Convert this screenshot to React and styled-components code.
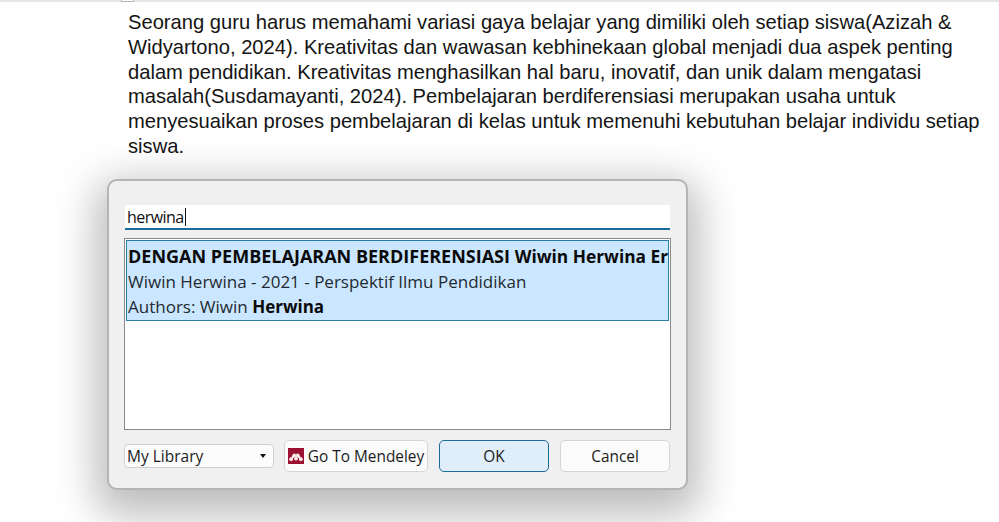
import React from "react";
import styled, { createGlobalStyle } from "styled-components";

const Global = createGlobalStyle`
  html, body { margin: 0; padding: 0; background: #fff; width: 999px; height: 522px; overflow: hidden; }
`;
const Page = styled.div`
  position: relative;
  width: 999px;
  height: 522px;
  overflow: hidden;
  background: #fff;
`;
const TopRule = styled.div`
  height: 2px;
  background: #e6e6e6;
`;
const Marker = styled.div`
  position: absolute;
  left: 121px;
  top: 0;
  width: 11px;
  height: 1px;
  background: #fff;
  border: solid #b5b5b5;
  border-width: 0 1px 1px;
`;
const Doc = styled.p`
  margin: 8px 0 0 128px;
  font: 20.17px/24.8px "Liberation Sans", Arial, sans-serif;
  color: #141414;
  white-space: nowrap;
`;
const Dialog = styled.section`
  position: absolute;
  left: 107px;
  top: 179px;
  width: 581px;
  height: 311px;
  box-sizing: border-box;
  padding: 24px 16px 0;
  display: flex;
  flex-direction: column;
  background: #f0f0f0;
  border: 2px solid #b4b4b4;
  border-radius: 10px;
  box-shadow: 0 14px 40px 12px rgba(0, 0, 0, 0.26);
  font-family: "Open Sans", "Noto Sans", sans-serif;
  color: #1b1b1b;
`;
const Search = styled.div`
  height: 25px;
  box-sizing: border-box;
  background: #fff;
  border-bottom: 2px solid #1a6c9c;
  padding-left: 2px;
  font-size: 16px;
  letter-spacing: -0.55px;
  line-height: 22px;
  color: #111;
  display: flex;
  align-items: center;
`;
const Caret = styled.span`
  width: 1px;
  height: 18px;
  margin-left: 1px;
  background: #111;
`;
const List = styled.div`
  margin: 8px 0 0 -1px;
  width: 547px;
  height: 192px;
  box-sizing: border-box;
  padding: 1px;
  background: #fff;
  border: 1px solid #8a8a8a;
`;
const Item = styled.div`
  height: 81px;
  box-sizing: border-box;
  border: 1px solid #2a7ea6;
  background: #cbe7ff;
  padding: 3px 1px 0 1px;
  overflow: hidden;
  font-size: 17px;
  line-height: 25px;
  white-space: nowrap;
`;
const Title = styled.div`
  font-weight: 700;
  color: #0a0a0a;
  font-size: 18px;
`;
const TitleName = styled.span`
  font-size: 17.33px;
`;
const Sub = styled.div`
  color: #1f2a30;
`;
const Strong = styled.b`
  color: #0a0a0a;
`;
const Footer = styled.div`
  margin: 10px 0 0 -1px;
  display: flex;
  align-items: center;
`;
const Select = styled.div`
  width: 150px;
  height: 24px;
  box-sizing: border-box;
  margin: -1px 10px 0 0;
  padding: 1px 7px 0 2px;
  display: flex;
  align-items: center;
  justify-content: space-between;
  background: #fcfcfc;
  border: 1px solid #d0d0d0;
  border-radius: 4px;
  font-size: 15.5px;
`;
const Arrow = styled.span`
  width: 0;
  height: 0;
  border: solid transparent;
  border-width: 4px 3.5px 0;
  border-top-color: #111;
`;
const Button = styled.div`
  height: 32px;
  width: ${(p) => p.$w}px;
  margin-right: ${(p) => p.$mr || 0}px;
  box-sizing: border-box;
  padding-top: 1px;
  display: flex;
  align-items: center;
  justify-content: center;
  gap: 4px;
  border-radius: 5px;
  font-size: 15.4px;
  background: ${(p) => (p.$primary ? "#e0eef9" : "#fbfbfb")};
  border: 1px solid ${(p) => (p.$primary ? "#1a6c9c" : "#d4d4d4")};
`;
const LogoSvg = styled.svg`
  margin-top: -2px;
`;

const MendeleyLogo = () => (
  <LogoSvg width="16" height="16" viewBox="0 0 16 16" aria-hidden="true">
    <rect width="16" height="16" fill="#9c1031" />
    <g fill="#f7e9ec">
      <path d="M2 10.4c1.3-.5 1.7-1.6 2.2-2.8.4-1 1-2.1 2-2.1.8 0 1.3.5 1.8 1.1.5-.6 1-1.1 1.8-1.1 1 0 1.6 1.1 2 2.1.5 1.2.9 2.3 2.2 2.8l-2.6.9c-.7-.9-1.2-1.9-2-2L8 8.8l-1.4.5c-.8.1-1.3 1.1-2 2z" />
      <circle cx="3.1" cy="11.2" r="1.9" />
      <circle cx="8" cy="10.6" r="1.9" />
      <circle cx="12.9" cy="11.2" r="1.9" />
    </g>
  </LogoSvg>
);

export default function App() {
  return (
    <Page>
      <Global />
      <TopRule />
      <Marker />
      <Doc>
        Seorang guru harus memahami variasi gaya belajar yang dimiliki oleh setiap siswa(Azizah &amp;
        <br />
        Widyartono, 2024). Kreativitas dan wawasan kebhinekaan global menjadi dua aspek penting
        <br />
        dalam pendidikan. Kreativitas menghasilkan hal baru, inovatif, dan unik dalam mengatasi
        <br />
        masalah(Susdamayanti, 2024). Pembelajaran berdiferensiasi merupakan usaha untuk
        <br />
        menyesuaikan proses pembelajaran di kelas untuk memenuhi kebutuhan belajar individu setiap
        <br />
        siswa.
      </Doc>
      <Dialog>
        <Search>
          herwina
          <Caret />
        </Search>
        <List>
          <Item>
            <Title>
              DENGAN PEMBELAJARAN BERDIFERENSIASI <TitleName>Wiwin Herwina Er</TitleName>
            </Title>
            <Sub>Wiwin Herwina - 2021 - Perspektif Ilmu Pendidikan</Sub>
            <Sub>
              Authors: Wiwin <Strong>Herwina</Strong>
            </Sub>
          </Item>
        </List>
        <Footer>
          <Select>
            My Library
            <Arrow />
          </Select>
          <Button $w={144} $mr={11}>
            <MendeleyLogo />
            Go To Mendeley
          </Button>
          <Button $w={110} $mr={11} $primary>
            OK
          </Button>
          <Button $w={110}>Cancel</Button>
        </Footer>
      </Dialog>
    </Page>
  );
}
